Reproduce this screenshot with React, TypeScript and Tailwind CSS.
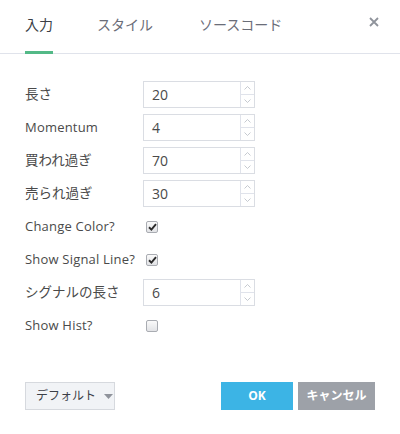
import React from "react";

const font = { fontFamily: '"Open Sans", "Noto Sans CJK JP", sans-serif' };

function Spin() {
  return (
    <div className="flex flex-col w-[14px] h-full border-l border-[#e0e3eb]">
      <div className="flex-1 flex items-center justify-center border-b border-[#e0e3eb]">
        <svg width="7" height="4" viewBox="0 0 7 4"><path d="M0.5 3.5 L3.5 0.5 L6.5 3.5" fill="none" stroke="#b8bcc4" strokeWidth="0.8" /></svg>
      </div>
      <div className="flex-1 flex items-center justify-center">
        <svg width="7" height="4" viewBox="0 0 7 4"><path d="M0.5 0.5 L3.5 3.5 L6.5 0.5" fill="none" stroke="#b8bcc4" strokeWidth="0.8" /></svg>
      </div>
    </div>
  );
}

function NumInput({ v }: { v: string }) {
  return (
    <div className="flex w-[112px] h-[27px] border border-[#dadde3] bg-white">
      <div className="flex-1 flex items-center pl-[8px] text-[14px] text-[#4a4a4a]">{v}</div>
      <Spin />
    </div>
  );
}

function Check({ on }: { on: boolean }) {
  return (
    <div className="ml-[3px] w-[12px] h-[12px] rounded-[2px] border border-[#a9acb2] bg-gradient-to-b from-[#fafafa] to-[#e2e3e6] flex items-center justify-center">
      {on && (
        <svg width="9" height="8" viewBox="0 0 9 8"><path d="M1 4.3 L3.4 6.6 L8 1.2" fill="none" stroke="#2b2b2b" strokeWidth="1.9" /></svg>
      )}
    </div>
  );
}

function Row({ label, jp, children }: { label: string; jp?: boolean; children: React.ReactNode }) {
  return (
    <div className="flex items-center h-[27px]">
      <div className={`w-[118px] whitespace-nowrap text-[#4a4a4a] ${jp ? "text-[13.5px]" : "text-[13px] tracking-[0.2px]"}`}>{label}</div>
      {children}
    </div>
  );
}

export default function App() {
  return (
    <div className="w-[400px] h-[434px] bg-white" style={font}>
      <div className="relative flex h-[54px] border-b border-[#e0e3eb] px-[25px]">
        <div className="relative pt-[14px] text-[14px] text-[#3b3f47]">
          入力
          <div className="absolute left-0 right-0 bottom-[-1px] h-[3px] bg-[#53b987]" />
        </div>
        <div className="ml-[44px] pt-[14px] text-[14px] text-[#6a6d78]">スタイル</div>
        <div className="ml-[46px] pt-[14px] text-[14px] text-[#6a6d78]">ソースコード</div>
        <div className="absolute right-[21px] top-[17px]">
          <svg width="10" height="10" viewBox="0 0 10 10"><path d="M1 1 L9 9 M9 1 L1 9" stroke="#8f939b" strokeWidth="1.8" /></svg>
        </div>
      </div>
      <div className="px-[25px] pt-[27px] flex flex-col gap-[6px]">
        <Row label="長さ" jp><NumInput v="20" /></Row>
        <Row label="Momentum"><NumInput v="4" /></Row>
        <Row label="買われ過ぎ" jp><NumInput v="70" /></Row>
        <Row label="売られ過ぎ" jp><NumInput v="30" /></Row>
        <Row label="Change Color?"><Check on /></Row>
        <Row label="Show Signal Line?"><Check on /></Row>
        <Row label="シグナルの長さ" jp><NumInput v="6" /></Row>
        <Row label="Show Hist?"><Check on={false} /></Row>
      </div>
      <div className="px-[25px] mt-[43px] flex items-center">
        <div className="w-[90px] h-[28px] border border-[#d6d9de] bg-[#f1f3f6] flex items-center pl-[10px] whitespace-nowrap text-[12px] text-[#3b3f47]">
          デフォルト
          <svg className="ml-[8px]" width="9" height="5" viewBox="0 0 9 5"><path d="M0 0 L9 0 L4.5 5 Z" fill="#8f939b" /></svg>
        </div>
        <div className="flex-1" />
        <div className="w-[72px] h-[28px] bg-[#3cb4e5] text-white font-bold text-[12px] flex items-center justify-center">OK</div>
        <div className="ml-[5px] w-[77px] h-[28px] bg-[#9da1a8] text-white font-bold text-[12px] whitespace-nowrap flex items-center justify-center">キャンセル</div>
      </div>
    </div>
  );
}
